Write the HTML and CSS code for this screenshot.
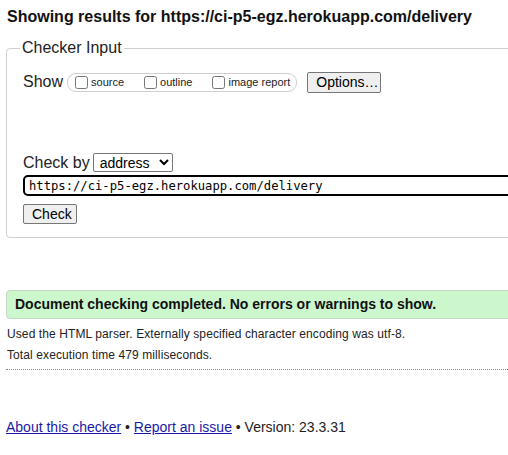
FILE: index.html
```html
<!DOCTYPE html>
<html lang="en">
<head>
<meta charset="utf-8">
<title>Nu Html Checker</title>
<link rel="stylesheet" href="styles.css">
</head>
<body>
<div class="page">
  <h2 class="title">Showing results for https://ci-p5-egz.herokuapp.com/delivery</h2>
  <fieldset class="checker">
    <legend class="checker-legend">Checker Input</legend>
    <div class="show-row">
      <span class="big-label">Show</span>
      <fieldset class="options">
        <label class="opt"><input type="checkbox" class="cb">source</label>
        <label class="opt"><input type="checkbox" class="cb">outline</label>
        <label class="opt"><input type="checkbox" class="cb">image report</label>
      </fieldset>
      <button class="btn options-btn" type="button">Options…</button>
    </div>
    <div class="checkby-row">
      <span class="big-label">Check by</span>
      <select class="sel"><option>address</option></select>
    </div>
    <div class="url-row">
      <input class="url" type="text" value="https://ci-p5-egz.herokuapp.com/delivery">
    </div>
    <div class="submit-row">
      <button class="btn check-btn" type="button">Check</button>
    </div>
  </fieldset>

  <p class="success">Document checking completed. No errors or warnings to show.</p>
  <p class="details">Used the HTML parser. Externally specified character encoding was utf-8.</p>
  <p class="details">Total execution time 479 milliseconds.</p>
  <hr class="dotted">

  <p class="footer"><a href="#">About this checker</a> • <a href="#">Report an issue</a> • Version: 23.3.31</p>
</div>
</body>
</html>
```

FILE: styles.css
```css
html, body {
  margin: 0;
  padding: 0;
  overflow: hidden;
  background: #fff;
}
body {
  font-family: "Liberation Sans", Arial, sans-serif;
  color: #000;
}
.page {
  width: 640px;
  padding: 8px 0 0 6px;
}
.title {
  margin: 0 0 0 1px;
  font-size: 16px;
  line-height: 18px;
  font-weight: bold;
  color: #111;
}
.checker {
  margin: 13px 0 0 0;
  padding: 14px 16px 13px 16px;
  border: 1px solid #cfcfcf;
  border-radius: 4px;
  min-width: 0;
}
.checker-legend {
  margin-left: -3px;
  padding: 0 2px;
  font-size: 16px;
  line-height: 18px;
  color: #222;
}
.show-row {
  display: flex;
  align-items: center;
  height: 22px;
}
.big-label {
  font-size: 16px;
  color: #222;
  margin-right: 4px;
}
.options {
  display: flex;
  align-items: center;
  margin: 0 10px 0 0;
  padding: 0 6px 0 7px;
  height: 17px;
  border: 1px solid #cfcfcf;
  border-radius: 9px;
  min-width: 0;
}
.opt {
  display: flex;
  align-items: center;
  font-size: 11px;
  color: #222;
  margin-right: 20px;
}
.opt:last-child {
  margin-right: 0;
}
.cb {
  width: 13px;
  height: 13px;
  margin: 0 3px 0 0;
}
.btn {
  font-family: "Liberation Sans", Arial, sans-serif;
  font-size: 14px;
  color: #000;
  background: #efefef;
  border: 1px solid #767676;
  border-radius: 2px;
  padding: 0 8px;
  line-height: 19px;
  height: 21px;
}
.options-btn {
  width: 74px;
}
.checkby-row {
  display: flex;
  align-items: center;
  margin-top: 60px;
  height: 19px;
}
.sel {
  font-family: "Liberation Sans", Arial, sans-serif;
  font-size: 14px;
  width: 80px;
  height: 19px;
  margin-left: -1px;
  padding: 0 0 0 2px;
  border: 1px solid #767676;
  border-radius: 2px;
  background: #fff;
  color: #000;
}
.url-row {
  margin-top: 3px;
}
.url {
  box-sizing: border-box;
  width: 560px;
  height: 21px;
  border: 2px solid #000;
  border-radius: 5px;
  padding: 0 0 0 4px;
  font-family: "DejaVu Sans Mono", "Liberation Mono", monospace;
  font-size: 12.2px;
  color: #000;
  outline: none;
}
.submit-row {
  margin-top: 8px;
}
.check-btn {
  width: 54px;
  height: 20px;
  line-height: 18px;
}
.success {
  margin: 52px 0 0 0;
  padding: 0 8px;
  height: 27px;
  line-height: 27px;
  background: #ccf7cc;
  border: 1px solid #c4d8c4;
  border-radius: 4px;
  font-size: 14px;
  font-weight: bold;
  color: #111;
}
.details {
  margin: 8px 0 0 1px;
  font-size: 12px;
  letter-spacing: 0.1px;
  line-height: 14px;
  color: #222;
}
.details + .details {
  margin-top: 7px;
}
.dotted {
  margin: 7px 0 0 0;
  border: 0;
  border-top: 1px dotted #888;
  height: 0;
}
.footer {
  margin: 49px 0 0 0;
  font-size: 14px;
  line-height: 16px;
  color: #222;
}
.footer a {
  color: #1a1aa6;
  text-decoration: underline;
}
```
